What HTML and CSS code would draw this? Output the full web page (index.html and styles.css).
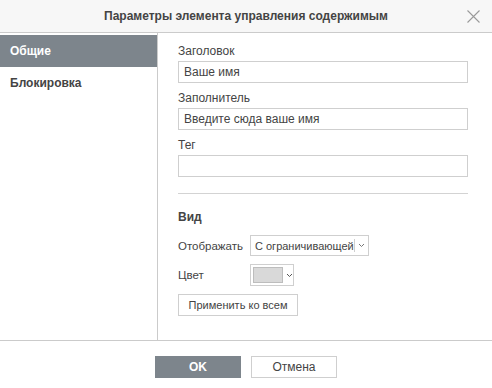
FILE: index.html
```html
<!DOCTYPE html>
<html lang="ru">
<head>
<meta charset="utf-8">
<link rel="stylesheet" href="styles.css">
</head>
<body>
<div class="dialog">
  <div class="header">
    <span class="title">Параметры элемента управления содержимым</span>
    <svg class="close" width="13" height="13" viewBox="0 0 13 13"><path d="M0.5 0.5 L12.5 12.5 M12.5 0.5 L0.5 12.5" stroke="#9a9a9a" stroke-width="1.1" fill="none"/></svg>
  </div>
  <div class="main">
    <div class="sidebar">
      <div class="nav-item active">Общие</div>
      <div class="nav-item">Блокировка</div>
    </div>
    <div class="content">
      <div class="label">Заголовок</div>
      <div class="input">Ваше имя</div>
      <div class="label gap">Заполнитель</div>
      <div class="input">Введите сюда ваше имя</div>
      <div class="label gap">Тег</div>
      <div class="input"></div>
      <div class="separator"></div>
      <div class="section">Вид</div>
      <div class="row">
        <span class="row-label">Отображать</span>
        <div class="select">
          <span class="select-text">С ограничивающей</span>
          <span class="select-arrow"><svg width="7" height="5" viewBox="0 0 7 5"><path d="M1 1 L3.5 3.5 L6 1" stroke="#777" fill="none" stroke-width="1"/></svg></span>
        </div>
      </div>
      <div class="row">
        <span class="row-label">Цвет</span>
        <div class="color">
          <span class="swatch"></span>
          <svg width="7" height="5" viewBox="0 0 7 5"><path d="M1 1 L3.5 3.5 L6 1" stroke="#555" fill="none" stroke-width="1"/></svg>
        </div>
      </div>
      <div class="btn-apply">Применить ко всем</div>
    </div>
  </div>
  <div class="footer">
    <div class="btn primary">OK</div>
    <div class="btn">Отмена</div>
  </div>
</div>
</body>
</html>
```
FILE: styles.css
```css
* { box-sizing: border-box; }
html, body { margin: 0; padding: 0; background: #fff; }
body {
  font-family: "Liberation Sans", Arial, sans-serif;
  font-size: 12px;
  color: #444;
  width: 492px;
  height: 388px;
  overflow: hidden;
}
.dialog { width: 492px; height: 388px; display: flex; flex-direction: column; }
.header {
  height: 33px;
  background: #f7f7f7;
  border-bottom: 1px solid #cbcbcb;
  display: flex;
  align-items: center;
  justify-content: center;
  position: relative;
}
.title { font-weight: bold; font-size: 12px; color: #444; }
.close { position: absolute; right: 12px; top: 10px; }
.main {
  height: 308px;
  display: flex;
  border-bottom: 1px solid #cbcbcb;
}
.sidebar {
  width: 158px;
  border-right: 1px solid #cbcbcb;
  padding-top: 2px;
}
.nav-item {
  height: 32px;
  line-height: 32px;
  padding-left: 10px;
  font-weight: bold;
  color: #444;
}
.nav-item.active { background: #7d858c; color: #fff; }
.content {
  flex: 1;
  padding: 11px 0 0 20px;
}
.label { height: 14px; line-height: 14px; margin-bottom: 3px; }
.label.gap { margin-top: 8px; }
.input {
  width: 290px;
  height: 22px;
  border: 1px solid #cfcfcf;
  line-height: 20px;
  padding-left: 5px;
  color: #444;
}
.separator {
  width: 290px;
  height: 1px;
  background: #d3d3d3;
  margin-top: 16px;
}
.section { font-weight: bold; margin-top: 16px; line-height: 14px; height: 14px; }
.row { display: flex; align-items: center; margin-top: 11px; height: 21px; font-size: 11.5px; }
.row + .row { margin-top: 8px; height: 22px; }
.row-label { width: 72px; }
.select {
  width: 119px;
  height: 21px;
  border: 1px solid #cfcfcf;
  display: flex;
  align-items: center;
  padding-left: 4px;
  overflow: hidden;
  font-size: 11px;
}
.select-text { white-space: nowrap; flex: 1; }
.select-arrow {
  display: flex;
  align-items: center;
  height: 13px;
  border-left: 1px solid #cfcfcf;
  padding: 0 3px 0 3px;
}
.color {
  width: 44px;
  height: 22px;
  border: 1px solid #cfcfcf;
  display: flex;
  align-items: center;
  padding-left: 2px;
  gap: 3px;
}
.swatch {
  width: 30px;
  height: 16px;
  background: #d9d9d9;
  border: 1px solid #bdbdbd;
}
.btn-apply {
  margin-top: 8px;
  width: 120px;
  height: 22px;
  border: 1px solid #cfcfcf;
  text-align: center;
  line-height: 20px;
  font-size: 11px;
}
.footer {
  flex: 1;
  display: flex;
  justify-content: center;
  gap: 10px;
  padding-top: 15px;
}
.btn {
  width: 86px;
  height: 22px;
  border: 1px solid #cfcfcf;
  text-align: center;
  line-height: 20px;
  color: #444;
}
.btn.primary {
  background: #7d858c;
  border-color: #7d858c;
  color: #fff;
  font-weight: bold;
}
```
